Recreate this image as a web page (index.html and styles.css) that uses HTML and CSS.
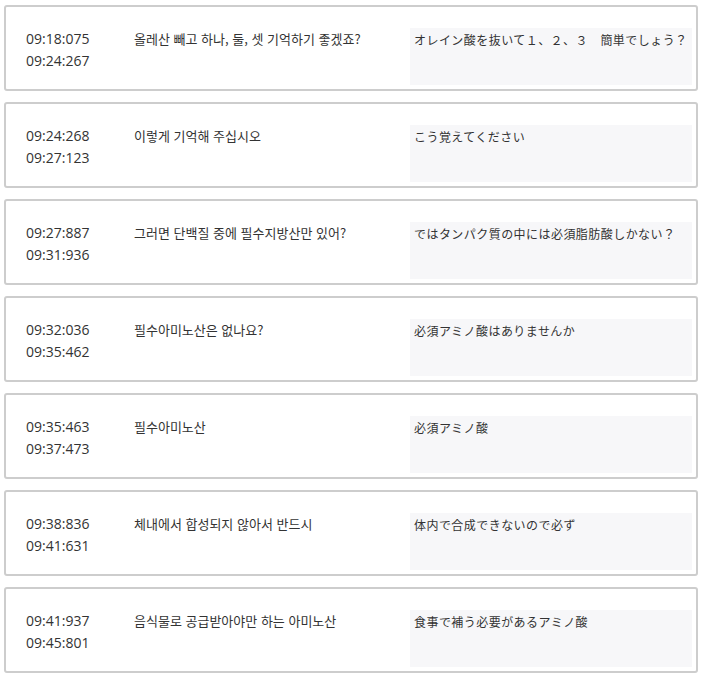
FILE: index.html
```html
<!DOCTYPE html>
<html lang="ko">
<head>
<meta charset="utf-8">
<title>Subtitles</title>
<link rel="stylesheet" href="styles.css">
</head>
<body>
<div class="list">
  <div class="card">
    <div class="times"><div>09:18:075</div><div>09:24:267</div></div>
    <div class="ko">올레산 빼고 하나, 둘, 셋 기억하기 좋겠죠?</div>
    <div class="ja" lang="ja">オレイン酸を抜いて１、２、３　簡単でしょう？</div>
  </div>
  <div class="card">
    <div class="times"><div>09:24:268</div><div>09:27:123</div></div>
    <div class="ko">이렇게 기억해 주십시오</div>
    <div class="ja" lang="ja">こう覚えてください</div>
  </div>
  <div class="card">
    <div class="times"><div>09:27:887</div><div>09:31:936</div></div>
    <div class="ko">그러면 단백질 중에 필수지방산만 있어?</div>
    <div class="ja" lang="ja">ではタンパク質の中には必須脂肪酸しかない？</div>
  </div>
  <div class="card">
    <div class="times"><div>09:32:036</div><div>09:35:462</div></div>
    <div class="ko">필수아미노산은 없나요?</div>
    <div class="ja" lang="ja">必須アミノ酸はありませんか</div>
  </div>
  <div class="card">
    <div class="times"><div>09:35:463</div><div>09:37:473</div></div>
    <div class="ko">필수아미노산</div>
    <div class="ja" lang="ja">必須アミノ酸</div>
  </div>
  <div class="card">
    <div class="times"><div>09:38:836</div><div>09:41:631</div></div>
    <div class="ko">체내에서 합성되지 않아서 반드시</div>
    <div class="ja" lang="ja">体内で合成できないので必ず</div>
  </div>
  <div class="card">
    <div class="times"><div>09:41:937</div><div>09:45:801</div></div>
    <div class="ko">음식물로 공급받아야만 하는 아미노산</div>
    <div class="ja" lang="ja">食事で補う必要があるアミノ酸</div>
  </div>
</div>
</body>
</html>
```

FILE: styles.css
```css
html, body {
  margin: 0;
  padding: 0;
  background: #ffffff;
}
body {
  font-family: "Open Sans", "Noto Sans CJK KR", sans-serif;
  color: #333333;
}
.list {
  width: 694px;
  margin: 5px 0 0 4px;
  display: flex;
  flex-direction: column;
  gap: 11px;
}
.card {
  box-sizing: border-box;
  height: 86px;
  border: 2px solid #cdcdcd;
  border-radius: 3px;
  padding: 21px 4px 4px 20px;
  display: flex;
  align-items: stretch;
}
.times {
  width: 108px;
  flex: none;
  font-family: "Open Sans", sans-serif;
  font-size: 14px;
  line-height: 22px;
}
.ko {
  width: 276px;
  flex: none;
  font-family: "Noto Sans CJK KR", sans-serif;
  font-size: 13px;
  line-height: 22px;
}
.ja {
  flex: 1;
  min-width: 0;
  background: #f7f7f9;
  font-family: "Noto Sans CJK JP", sans-serif;
  font-size: 12px;
  letter-spacing: 0.45px;
  line-height: 16px;
  padding: 4px 0 0 4px;
  white-space: nowrap;
  color: #333333;
}
```
